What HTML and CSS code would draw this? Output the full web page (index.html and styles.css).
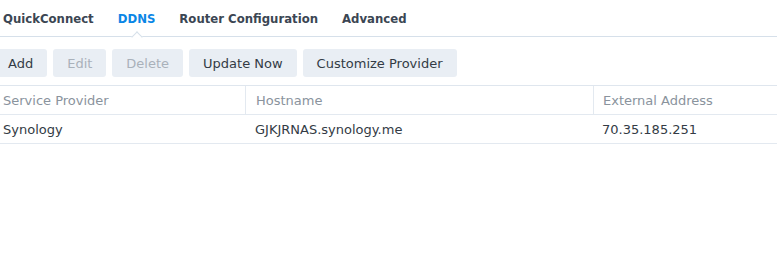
FILE: index.html
```html
<!DOCTYPE html>
<html>
<head>
<meta charset="utf-8">
<link rel="stylesheet" href="styles.css">
</head>
<body>
<div class="page">
  <div class="tabs">
    <div class="tab">QuickConnect</div>
    <div class="tab active">DDNS</div>
    <div class="tab">Router Configuration</div>
    <div class="tab">Advanced</div>
  </div>
  <div class="toolbar">
    <button class="btn btn-add">Add</button>
    <button class="btn disabled">Edit</button>
    <button class="btn disabled">Delete</button>
    <button class="btn">Update Now</button>
    <button class="btn">Customize Provider</button>
  </div>
  <div class="grid">
    <div class="row head">
      <div class="cell c1">Service Provider</div>
      <div class="cell c2">Hostname</div>
      <div class="cell c3">External Address</div>
    </div>
    <div class="row">
      <div class="cell c1">Synology</div>
      <div class="cell c2">GJKJRNAS.synology.me</div>
      <div class="cell c3">70.35.185.251</div>
    </div>
  </div>
</div>
</body>
</html>
```
FILE: styles.css
```css
html, body {
  margin: 0;
  padding: 0;
  background: #fff;
}
body {
  font-family: "DejaVu Sans", Verdana, sans-serif;
  font-size: 13px;
  color: #333b45;
  overflow: hidden;
}
.page {
  width: 777px;
}
.tabs {
  display: flex;
  height: 36px;
  border-bottom: 1px solid #d6e0ea;
  align-items: center;
  padding-left: 3px;
  gap: 24px;
}
.tab {
  font-family: "DejaVu Sans Condensed", "DejaVu Sans", sans-serif;
  font-weight: bold;
  color: #3b4653;
  position: relative;
  height: 36px;
  line-height: 37px;
}
.tab.active {
  color: #0a86e6;
}
.tab.active::after {
  content: "";
  position: absolute;
  left: 50%;
  bottom: -1px;
  width: 8px;
  height: 8px;
  margin-left: -4px;
  transform: translateY(50%) rotate(45deg);
  background: #fff;
  border-left: 1px solid #d6e0ea;
  border-top: 1px solid #d6e0ea;
  box-sizing: border-box;
}
.toolbar {
  display: flex;
  gap: 6px;
  margin-top: 12px;
  margin-bottom: 8px;
}
.btn {
  font-family: inherit;
  font-size: 13px;
  height: 28px;
  padding: 0 14px;
  border: none;
  border-radius: 3px;
  background: #e9eef4;
  color: #333b45;
}
.btn-add {
  margin-left: -6px;
}
.btn.disabled {
  color: #a9b1ba;
}
.grid {
  border-top: 1px solid #dfe6ee;
}
.row {
  display: flex;
  height: 28px;
  border-bottom: 1px solid #e3e9f0;
}
.cell {
  height: 28px;
  padding-top: 2px;
  line-height: 26px;
  box-sizing: border-box;
  white-space: nowrap;
}
.c1 { width: 245px; padding-left: 3px; }
.c2 { width: 348px; padding-left: 10px; }
.c3 { flex: 1; padding-left: 9px; }
.head .cell {
  color: #8a939d;
}
.head .c2, .head .c3 {
  border-left: 1px solid #e3e9f0;
}
```
